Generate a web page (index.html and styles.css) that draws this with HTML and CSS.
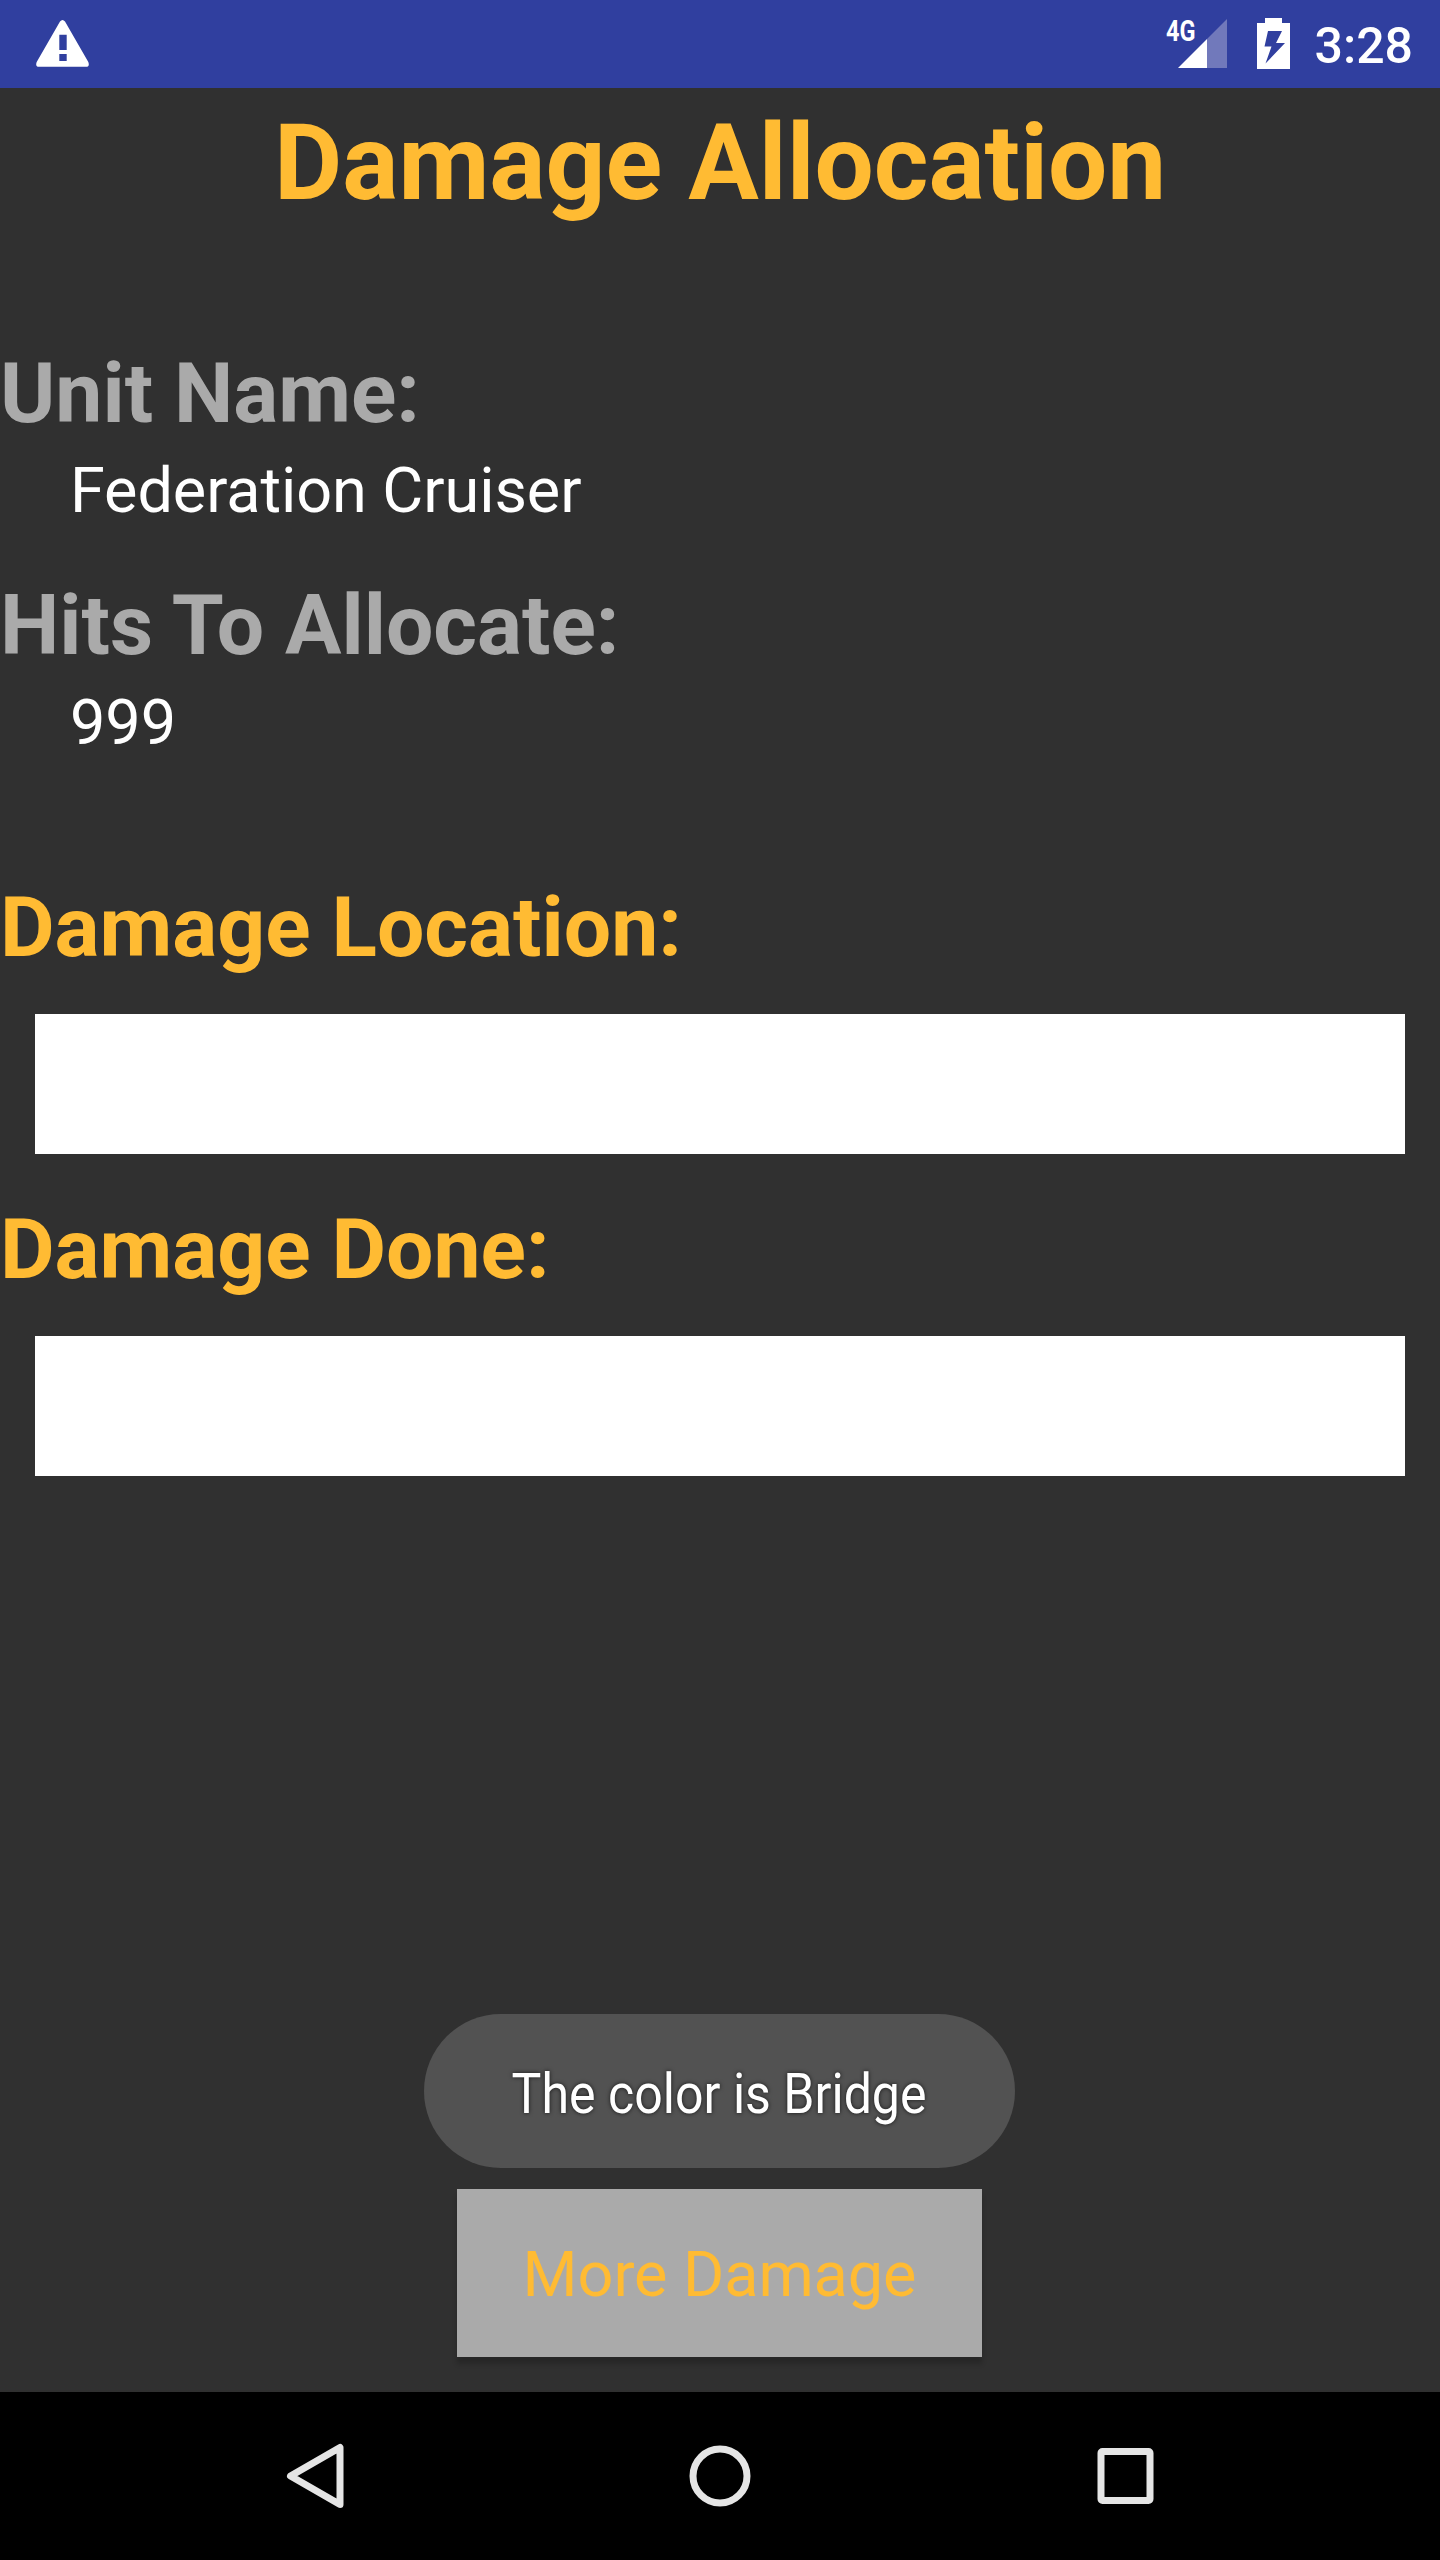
FILE: index.html
```html
<!DOCTYPE html>
<html lang="en">

<head>
    <meta charset="UTF-8">
    <title>Damage Allocation</title>
    <link rel="stylesheet" href="styles.css">
</head>

<body>
    <header class="status_bar">
        <svg class="icon_warning" width="53" height="47" viewBox="0 0 53 47">
            <path fill="#ffffff" fill-rule="evenodd" d="M24 1.5Q26.5 -1.5 29 1.5L52.3 42Q54 46.7 50 46.7H3Q-1 46.7 .7 42ZM23.3 14.7V30H30.7V14.7ZM23.3 34V41H30.7V34Z"/>
        </svg>
        <div class="status_right">
            <svg class="icon_signal" width="66" height="58" viewBox="-4 -8 66 58">
                <path fill="#7179bb" d="M61 0V49H41V20Z"/>
                <path fill="#ffffff" d="M41 20V49H12Z"/>
                <text class="network" x="0" y="22" textLength="29.5" lengthAdjust="spacingAndGlyphs">4G</text>
            </svg>
            <svg class="icon_battery" width="33" height="51" viewBox="0 0 33 51">
                <path fill="#ffffff" fill-rule="evenodd" d="M8 0H25V5H33V51H0V5H8ZM11 13L7.5 28.5H14.5L8.5 45.5L28 25H19L25 13Z"/>
            </svg>
            <span class="clock">3:28</span>
        </div>
    </header>

    <main class="content">
        <h1 class="title">Damage Allocation</h1>

        <h2 class="label">Unit Name:</h2>
        <p class="value">Federation Cruiser</p>

        <h2 class="label">Hits To Allocate:</h2>
        <p class="value value_hits">999</p>

        <h2 class="label label_damage">Damage Location:</h2>
        <div class="field"></div>

        <h2 class="label label_damage">Damage Done:</h2>
        <div class="field"></div>

        <button class="more_button">More Damage</button>
        <div class="toast">
            <span class="toast_text">The color is Bridge</span>
        </div>
    </main>

    <nav class="nav_bar">
        <svg width="70" height="70" viewBox="0 0 70 70">
            <path d="M10.5 35L60 6.5V63.5Z"/>
        </svg>
        <svg width="70" height="70" viewBox="0 0 70 70">
            <circle cx="35" cy="35" r="27"/>
        </svg>
        <svg width="70" height="70" viewBox="0 0 70 70">
            <rect x="11" y="10.5" width="49" height="49" rx="1.5"/>
        </svg>
    </nav>
</body>

</html>
```
FILE: styles.css
```css
html,
body {
    margin: 0;
    padding: 0;
    height: 100%;
}

body {
    display: flex;
    flex-direction: column;
    overflow: hidden;
    background-color: #303030;
    color: #ffffff;
    font-family: Roboto, sans-serif;
}

.status_bar {
    display: flex;
    justify-content: space-between;
    box-sizing: border-box;
    height: 88px;
    padding: 20px 27px 0 36px;
    background-color: #303f9f;
}

.status_right {
    display: flex;
}

.icon_signal {
    margin-top: -9px;
}

.icon_battery {
    margin: -2px 25px 0 29px;
}

.network {
    fill: #ffffff;
    font-size: 29px;
    font-weight: bold;
}

.clock {
    margin-top: -3px;
    font-size: 50px;
    font-weight: 500;
    line-height: 58px;
}

.content {
    position: relative;
    display: flex;
    flex: 1;
    flex-direction: column;
    padding-top: 14px;
}

.title {
    margin: 0 0 120px;
    color: #ffbb33;
    font-size: 105px;
    line-height: 123px;
    text-align: center;
}

.label {
    margin: 0;
    color: #aaaaaa;
    font-size: 84px;
    line-height: 98px;
}

.label_damage {
    color: #ffbb33;
}

.value {
    margin: 11px 0 49px 70px;
    font-size: 63px;
    letter-spacing: -0.08px;
    line-height: 74px;
}

.value_hits {
    margin-bottom: 119px;
}

.field {
    height: 140px;
    margin: 37px 35px 47px;
    background-color: #ffffff;
}

.more_button {
    align-self: center;
    width: 525px;
    height: 168px;
    margin: auto 1px 35px 0;
    padding: 3px 0 0;
    border: none;
    background-color: #aaaaaa;
    box-shadow: 0 7px 5px rgba(0, 0, 0, 0.2);
    color: #ffbb33;
    font-family: inherit;
    font-size: 63px;
    letter-spacing: -0.08px;
}

.toast {
    position: absolute;
    bottom: 224px;
    left: 424px;
    display: flex;
    justify-content: center;
    align-items: center;
    box-sizing: border-box;
    width: 591px;
    height: 154px;
    padding-top: 6px;
    border-radius: 77px;
    background-color: #525252;
}

.toast_text {
    font-size: 56px;
    text-shadow: 0 0 5px rgba(0, 0, 0, 0.73);
    white-space: nowrap;
    transform: scaleX(0.894);
}

.nav_bar {
    display: flex;
    justify-content: center;
    align-items: center;
    gap: 335px;
    height: 168px;
    background-color: #000000;
}

.nav_bar svg {
    fill: none;
    stroke: #e5e5e5;
    stroke-width: 7;
    stroke-linejoin: round;
}
```
